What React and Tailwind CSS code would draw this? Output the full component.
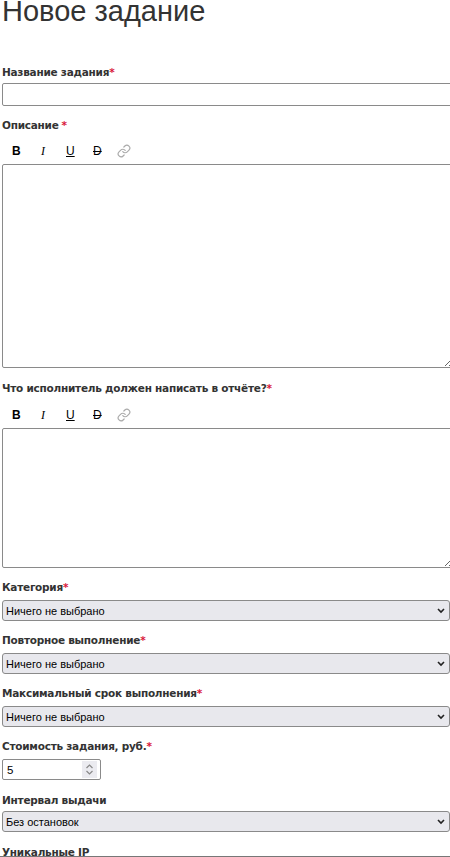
import { Link } from "lucide-react";

const labelFont = "font-['DejaVu_Sans','Liberation_Sans',sans-serif]";
const fieldFont = "font-['Liberation_Sans',sans-serif]";

function Label({ text, star = true, gap = false, className = "" }) {
  return (
    <label className={`block h-[14px] text-[10.5px] leading-[14px] font-bold text-[#333] tracking-[-0.25px] ${labelFont} ${className}`}>
      {text}
      {star && <span className={`text-[#d9193c] ${gap ? "ml-[3px]" : ""}`}>*</span>}
    </label>
  );
}

function Toolbar({ className = "mt-[12px]" }) {
  return (
    <div className={`flex items-center h-[14px] mb-[6px] pl-[10px] text-[12px] leading-[14px] text-black font-['Liberation_Sans',sans-serif] ${className}`}>
      <span className="w-[8px] font-bold">B</span>
      <span className="w-[8px] ml-[21px] italic font-['Liberation_Serif',serif]">I</span>
      <span className="w-[9px] ml-[17px] underline">U</span>
      <span className="w-[9px] ml-[18px] line-through">D</span>
      <Link size={14} strokeWidth={2} className="ml-[15px] text-[#aaa]" />
    </div>
  );
}

function Select({ value, className = "mt-[6px]" }) {
  return (
    <div className={`relative w-[448px] h-[21px] ${className}`}>
      <select
        defaultValue={value}
        className={`block w-full h-full appearance-none pl-[3px] pt-[1px] bg-[#e8e8ed] border border-[#8a8a8a] rounded-[3px] text-[11px] text-black ${fieldFont}`}
      >
        <option>{value}</option>
      </select>
      <svg className="absolute right-[5px] top-[8px]" width="8" height="6" viewBox="0 0 8 6" fill="none">
        <path d="M1 1 4 4 7 1" stroke="#222" strokeWidth="1.6" />
      </svg>
    </div>
  );
}

export default function App() {
  return (
    <div className="h-[857px] w-[450px] overflow-hidden bg-white pl-[2px] border-b border-[#777]">
      <h1 className="h-[22px] text-[29px] leading-[22px] font-normal text-[#333] font-['Liberation_Sans',sans-serif]">
        Новое задание
      </h1>

      <Label text="Название задания" className="mt-[43px]" />
      <input
        type="text"
        className="block w-[452px] h-[23px] mt-[4px] border border-[#8a8a8a] rounded-[2px] bg-white"
      />

      <Label text="Описание" gap className="mt-[12px]" />
      <Toolbar />
      <textarea className="block w-[452px] h-[204px] border border-[#8a8a8a] rounded-[2px] bg-white" />

      <Label text="Что исполнитель должен написать в отчёте?" className="mt-[13px]" />
      <Toolbar className="mt-[13px]" />
      <textarea className="block w-[452px] h-[140px] border border-[#8a8a8a] rounded-[2px] bg-white" />

      <Label text="Категория" className="mt-[12px]" />
      <Select value="Ничего не выбрано" />

      <Label text="Повторное выполнение" className="mt-[12px]" />
      <Select value="Ничего не выбрано" />

      <Label text="Максимальный срок выполнения" className="mt-[12px]" />
      <Select value="Ничего не выбрано" />

      <Label text="Стоимость задания, руб." className="mt-[12px]" />
      <div className="relative w-[99px] h-[21px] mt-[6px]">
        <input
          type="text"
          defaultValue="5"
          className={`block w-full h-full pl-[4px] border border-[#8a8a8a] rounded-[2px] bg-white text-[11.5px] text-black ${fieldFont}`}
        />
        <svg className="absolute right-[4px] top-[2px]" width="15" height="17" viewBox="0 0 15 17" fill="none">
          <rect width="15" height="17" fill="#ebebf0" />
          <path d="M4.5 7 7.5 4 10.5 7M4.5 10 7.5 13 10.5 10" stroke="#888" strokeWidth="1.2" />
        </svg>
      </div>

      <Label text="Интервал выдачи" star={false} className="mt-[13px]" />
      <Select value="Без остановок" className="mt-[4px]" />

      <Label text="Уникальные IP" star={false} className="mt-[13px]" />
    </div>
  );
}
